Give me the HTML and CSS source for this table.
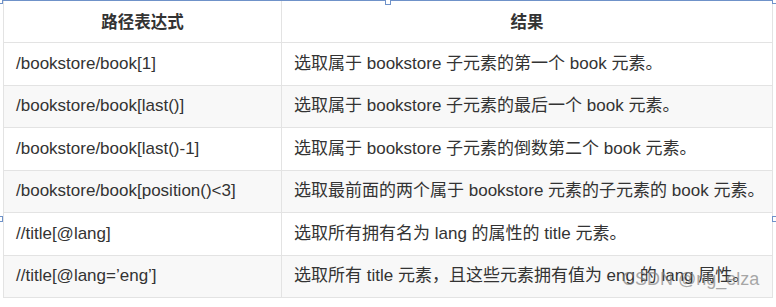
FILE: index.html
```html
<!DOCTYPE html>
<html lang="zh-CN">
<head>
<meta charset="utf-8">
<title>XPath 路径表达式</title>
<link rel="stylesheet" href="styles.css">
</head>
<body>
<div class="frame">
  <table class="xpath">
    <thead>
      <tr><th class="c1">路径表达式</th><th>结果</th></tr>
    </thead>
    <tbody>
      <tr><td class="c1">/bookstore/book[1]</td><td>选取属于 bookstore 子元素的第一个 book 元素。</td></tr>
      <tr><td class="c1">/bookstore/book[last()]</td><td>选取属于 bookstore 子元素的最后一个 book 元素。</td></tr>
      <tr><td class="c1">/bookstore/book[last()-1]</td><td>选取属于 bookstore 子元素的倒数第二个 book 元素。</td></tr>
      <tr><td class="c1">/bookstore/book[position()&lt;3]</td><td>选取最前面的两个属于 bookstore 元素的子元素的 book 元素。</td></tr>
      <tr><td class="c1">//title[@lang]</td><td>选取所有拥有名为 lang 的属性的 title 元素。</td></tr>
      <tr><td class="c1">//title[@lang=’eng’]</td><td>选取所有 title 元素，且这些元素拥有值为 eng 的 lang 属性。</td></tr>
    </tbody>
  </table>
  <span class="handle h-tl"></span>
  <span class="handle h-tc"></span>
  <span class="handle h-tr"></span>
  <span class="handle h-ml"></span>
  <span class="handle h-mr"></span>
  <div class="watermark">CSDN @ng_elza</div>
</div>
</body>
</html>
```
FILE: styles.css
```css
html, body {
  margin: 0;
  padding: 0;
  background: #ffffff;
}
body {
  width: 776px;
  height: 307px;
  overflow: hidden;
  font-family: "Liberation Sans", "Noto Sans CJK SC", sans-serif;
  color: #333333;
}
.frame {
  position: relative;
  width: 776px;
  height: 307px;
  border-top: 1px solid #6f92c9;
  box-sizing: border-box;
}
.xpath {
  margin-left: 3px;
  width: 770px;
  border-collapse: collapse;
  table-layout: fixed;
  font-size: 17px;
}
.xpath th,
.xpath td {
  border: 1px solid #e3e3e3;
  height: 41.5px;
  padding: 0 12px;
  text-align: left;
  vertical-align: middle;
  white-space: nowrap;
  line-height: 20px;
}
.xpath thead th {
  border-top: none;
  height: 41px;
  text-align: center;
  font-weight: bold;
  font-size: 16.5px;
}
.xpath .c1 {
  width: 253px;
}
.xpath tbody tr:nth-child(even) {
  background: #f8f8f8;
}
.handle {
  position: absolute;
  width: 4px;
  height: 4px;
  border: 1px solid #6f92c9;
  background: #ffffff;
}
.h-tl { left: -3px; top: -3px; }
.h-tc { left: 385px; top: -2px; }
.h-tr { left: 772px; top: -3px; }
.h-ml { left: -3px; top: 215px; }
.h-mr { left: 772px; top: 215px; }
.watermark {
  position: absolute;
  left: 622px;
  top: 268px;
  font-size: 18px;
  font-family: "Liberation Sans", sans-serif;
  color: rgba(130, 130, 130, 0.7);
}
```
